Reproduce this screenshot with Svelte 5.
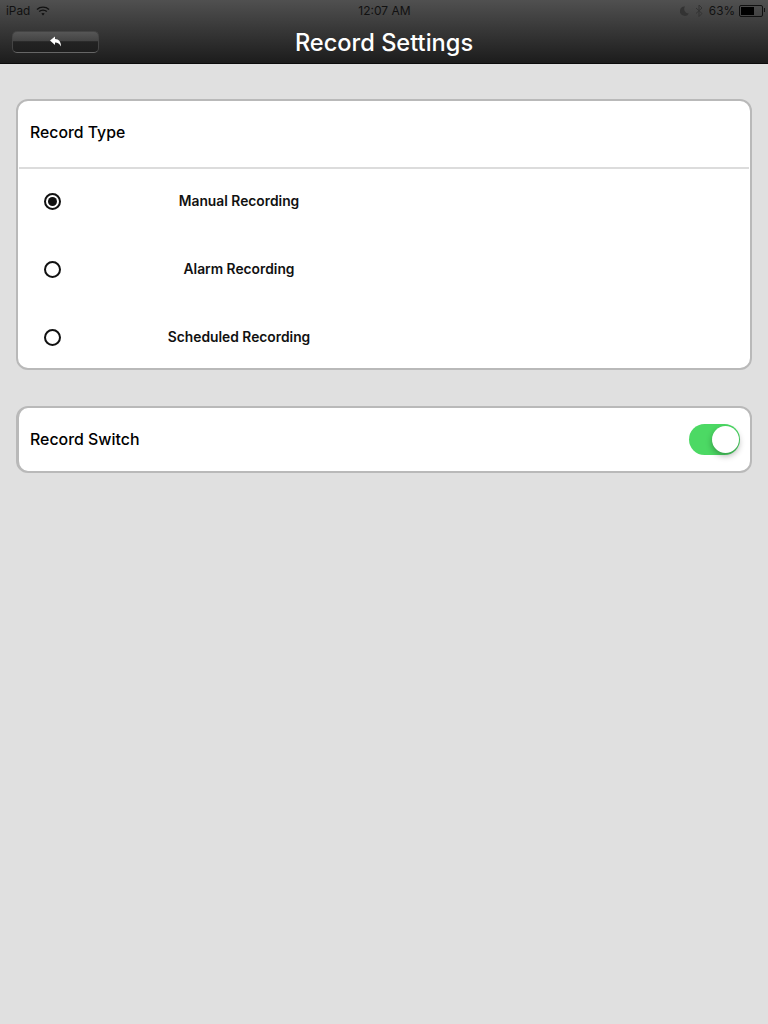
<script>
  const options = [
    { label: "Manual Recording", checked: true },
    { label: "Alarm Recording", checked: false },
    { label: "Scheduled Recording", checked: false }
  ];
</script>

<header class="header">
  <div class="status">
    <div class="status-left">
      <span>iPad</span>
      <svg width="14" height="10" viewBox="0 0 14 10">
        <path d="M1 3.400C4.300.4 9.700.4 13 3.400" fill="none" stroke="#111" stroke-width="1.400"/>
        <path d="M3.200 5.500C5.300 3.700 8.700 3.700 10.800 5.500" fill="none" stroke="#111" stroke-width="1.400"/>
        <path d="M5.300 7.500C6.300 6.700 7.700 6.700 8.700 7.500L7 9.400Z" fill="#111"/>
      </svg>
    </div>
    <div class="status-time">12:07 AM</div>
    <div class="status-right">
      <svg class="moon" width="9" height="10" viewBox="0 0 9 10">
        <path d="M5 .5A4.700 4.700 0 1 0 8.800 7.400 4.400 4.400 0 0 1 5 .5Z" fill="#333"/>
      </svg>
      <svg class="bt" width="8" height="14" viewBox="0 0 8 14">
        <path d="M1 4l6 5.500-3 3V1l3 3-6 5.500" fill="none" stroke="#333" stroke-width="1"/>
      </svg>
      <span>63%</span>
      <div class="battery"><div class="battery-fill"></div></div>
    </div>
  </div>
  <div class="navbar">
    <button class="back" aria-label="Back">
      <svg width="12" height="11" viewBox="0 0 12 11">
        <path d="M0 4.500 5 .5V3C9 3 11 6 11 10.500 9.500 8 8 6.500 5 6.500V9Z" fill="#fff"/>
      </svg>
    </button>
    <h1 class="title">Record Settings</h1>
  </div>
</header>

<main class="content">
  <section class="card">
    <div class="card-head">Record Type</div>
    <div class="options">
      {#each options as o}
        <div class="option">
          <span class="radio">{#if o.checked}<span class="dot"></span>{/if}</span>
          <span class="option-label">{o.label}</span>
        </div>
      {/each}
    </div>
  </section>

  <section class="card switch-row">
    <span class="switch-label">Record Switch</span>
    <div class="toggle"><div class="knob"></div></div>
  </section>
</main>

<style>
  :global(body) {
    background: #e0e0e0;
    font-family: "Inter", "Liberation Sans", sans-serif;
    color: #000;
  }
  .header {
    height: 64px;
    box-sizing: border-box;
    background: linear-gradient(#505050, #1c1c1c);
    border-bottom: 1px solid #0c0c0c;
    position: relative;
  }
  .status {
    height: 20px;
    display: grid;
    grid-template-columns: 1fr auto 1fr;
    align-items: center;
    padding: 1px 5px 0 6px;
    box-sizing: border-box;
    font-size: 11.800px;
    color: #111;
  }
  .status-left { display: flex; align-items: center; gap: 6px; }
  .status-time { font-size: 12px; }
  .status-right { display: flex; align-items: center; justify-content: flex-end; gap: 3px; }
  .moon { margin-right: 3px; }
  .bt { margin-right: 3px; }
  .battery {
    width: 20px;
    height: 8px;
    border: 1px solid #111;
    border-radius: 2px;
    padding: 1px;
    margin-left: 1px;
    display: flex;
    position: relative;
  }
  .battery::after {
    content: "";
    position: absolute;
    right: -3px;
    top: 2px;
    width: 1px;
    height: 4px;
    background: #111;
  }
  .battery-fill { width: 63%; background: #000; }
  .navbar {
    height: 43px;
    display: flex;
    align-items: center;
    justify-content: center;
    position: relative;
  }
  .title {
    margin: 0;
    font-size: 23.600px;
    font-weight: 500;
    color: #fff;
    line-height: 1;
    position: relative;
    top: 1px;
  }
  .back {
    position: absolute;
    left: 12px;
    top: 11px;
    width: 87px;
    height: 22px;
    padding: 0 0 2px;
    display: flex;
    align-items: center;
    justify-content: center;
    border: 1px solid #444;
    border-bottom-color: #666;
    border-radius: 5px;
    background: linear-gradient(#565656 0, #434343 46%, #232323 48%, #1e1e1e 100%);
  }
  .content {
    padding: 35px 16px 0;
    display: flex;
    flex-direction: column;
    gap: 36px;
  }
  .card {
    background: #fff;
    border: 2px solid #b9b9b9;
    border-radius: 12px;
    box-sizing: border-box;
  }
  .card-head {
    height: 62px;
    padding-bottom: 4px;
    box-sizing: content-box;
    display: flex;
    align-items: center;
    padding-left: 11px;
    font-size: 15.800px;
    font-weight: 500;
    border-bottom: 2px solid #dcdcdc;
    margin-left: 1px;
    margin-right: 1px;
  }
  .options { display: flex; flex-direction: column; height: 201px; margin-top: -2px; }
  .option {
    height: 68px;
    flex: none;
    display: flex;
    align-items: center;
  }
  .radio {
    margin-left: 26px;
    width: 17px;
    height: 17px;
    box-sizing: border-box;
    border: 2px solid #111;
    border-radius: 50%;
    display: flex;
    align-items: center;
    justify-content: center;
  }
  .dot { width: 9px; height: 9px; border-radius: 50%; background: #111; }
  .option-label {
    width: 356px;
    text-align: center;
    font-size: 13.800px;
    font-weight: 600;
    line-height: 16px;
    color: #111;
  }
  .switch-row {
    height: 67px;
    display: flex;
    align-items: center;
    justify-content: space-between;
    padding: 0 10px 0 11px;
    border-left-width: 3px;
  }
  .switch-label { font-size: 15.900px; font-weight: 500; }
  .toggle {
    width: 51px;
    height: 31px;
    border-radius: 16px;
    background: #4cd964;
    position: relative;
  }
  .knob {
    position: absolute;
    top: 2px;
    right: 1px;
    width: 27px;
    height: 27px;
    border-radius: 50%;
    background: #fff;
    box-shadow: 0 3px 6px rgba(0, 0, 0, 0.3);
  }
</style>
